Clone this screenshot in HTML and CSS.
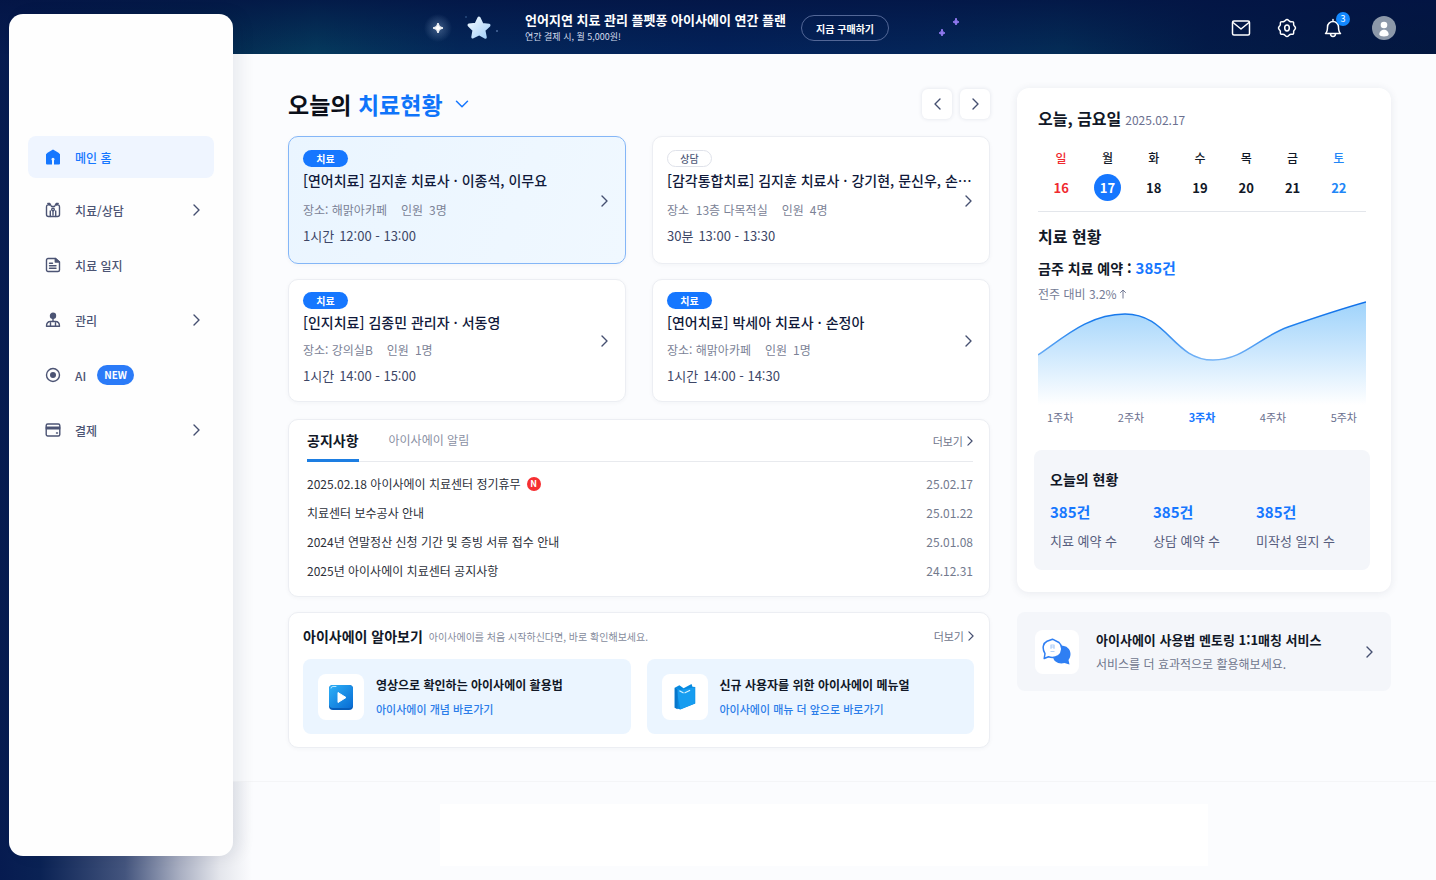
FILE: index.html
```html
<!DOCTYPE html>
<html lang="ko">
<head>
    <meta charset="UTF-8">
    <meta name="viewport" content="width=device-width, initial-scale=1.0">
    <title>아이사에이</title>
    <link rel="stylesheet" href="styles.css">
</head>
<body>
    <svg class="sprite" aria-hidden="true">
        <symbol id="chevron" viewBox="0 0 7 12"><path d="M1 1l5 5-5 5" fill="none" stroke="currentColor" stroke-width="1.4" stroke-linecap="round" stroke-linejoin="round"/></symbol>
    </svg>

    <div class="app">
        <header class="topbar">
            <div class="promo">
                <svg class="sparkle" viewBox="0 0 28 28" aria-hidden="true"><path d="M14 9Q14.600 13.400 19 14 14.600 14.600 14 19 13.400 14.600 9 14 13.400 13.400 14 9Z" fill="#fff" stroke="#fff"/></svg>
                <svg class="star" viewBox="0 0 36 28" aria-hidden="true">
                    <defs><linearGradient id="starFill" x1="0" y1="0" x2="1" y2="1"><stop offset="0" stop-color="#f1f9ff"/><stop offset="1" stop-color="#a3cff8"/></linearGradient></defs>
                    <path d="m16 4 3.1 6.4 6.9.9-5.1 4.9 1.4 7-6.3-3.4-6.2 3.2 1.2-6.9-5-5 7-.9Z" fill="url(#starFill)" stroke="url(#starFill)" stroke-width="3" stroke-linejoin="round"/>
                    <circle cx="34" cy="17" r="1" fill="#4a6a9c"/><circle cx="3" cy="3" r="1" fill="#274a7c"/>
                </svg>
                <div class="promo-text">
                    <strong>언어지연 치료 관리 플펫퐁 아이사에이 연간 플랜</strong>
                    <span>연간 결제 시, 월 5,000원!</span>
                </div>
                <button class="promo-button" type="button">지금 구매하기</button>
                <svg class="sparkles" viewBox="0 0 24 22" aria-hidden="true">
                    <path d="M18 1Q18.400 4.600 21 5 18.400 5.400 18 8 17.600 5.400 15 5 17.600 4.600 18 1ZM4 12Q4.400 15.600 7 16 4.400 16.400 4 19 3.600 16.400 1 16 3.600 15.600 4 12Z" fill="#8f78ee" stroke="#8f78ee"/>
                </svg>
            </div>
            <div class="tools">
                <button type="button" aria-label="메일">
                    <svg viewBox="0 0 22 22"><rect x="2.500" y="4" width="17" height="14" rx="1.500"/><path d="m3 5.500 8 6.500 8-6.500"/></svg>
                </button>
                <button type="button" aria-label="설정">
                    <svg viewBox="0 0 22 22"><path d="M11 2.500c1.200 0 1.800 1.500 3 2s2.600-.3 3.300.5 0 2.100.5 3.200 1.700 1.600 1.700 2.800-1.200 1.700-1.700 2.800.3 2.400-.5 3.200-2.200 0-3.300.5-1.800 2-3 2-1.900-1.500-3-2-2.500.3-3.300-.5 0-2.100-.5-3.200-1.700-1.600-1.700-2.800 1.200-1.700 1.700-2.800-.3-2.400.5-3.200 2.100 0 3.300-.5 1.800-2 3-2Z"/><ellipse cx="11" cy="11" rx="2.300" ry="2.900"/></svg>
                </button>
                <button type="button" aria-label="알림">
                    <svg viewBox="0 0 22 22"><path d="M11 2.500V4M3.500 16.500c1.800-1.300 2-3 2-6.500a5.500 5.500 0 0 1 11 0c0 3.500.2 5.200 2 6.500ZM8.500 16.800c0 3.500 5 3.500 5 0"/></svg>
                    <span class="count">3</span>
                </button>
                <button class="avatar" type="button" aria-label="내 계정">
                    <svg viewBox="0 0 24 24"><circle cx="12" cy="12" r="12" fill="#8c98a9"/><circle cx="12" cy="9" r="3.300" fill="#fff"/><path d="M7.300 18.500c0-6.500 9.400-6.500 9.400 0 0 2.500-9.400 2.500-9.400 0Z" fill="#fff"/></svg>
                </button>
            </div>
        </header>

        <aside class="sidebar">
            <nav>
                <a class="nav-item active" href="#">
                    <svg viewBox="0 0 16 16"><path d="M1 5.200 2.500 3.800 8 .6l5.500 3.200L15 5.200V14.500a1 1 0 0 1-1 1H9V11.500a1.500 1.500 0 1 0-2 0v4H2a1 1 0 0 1-1-1Z" fill="currentColor"/></svg>
                    <span>메인 홈</span>
                </a>
                <a class="nav-item" href="#">
                    <svg class="line" viewBox="0 0 16 16"><path d="M4.500 3C2 2.500 1.500 3.500 1.500 5v7.500a2 2 0 0 0 2 2h1.800V9M11.500 3c2.500-.5 3 .5 3 2v7.500a2 2 0 0 1-2 2h-1.800V9M2.800 1.500h2l1.700 3h3l1.700-3h2"/><circle cx="8" cy="7.500" r="1.300"/><path d="M8 9v4M5.500 14.500h5"/></svg>
                    <span>치료/상담</span>
                    <svg class="chevron"><use href="#chevron"/></svg>
                </a>
                <a class="nav-item" href="#">
                    <svg class="line" viewBox="0 0 16 16"><path d="M3 1.500h7.500L14.500 5v8a1.500 1.500 0 0 1-1.500 1.500H3A1.500 1.500 0 0 1 1.500 13V3A1.500 1.500 0 0 1 3 1.500ZM4.500 6.200h3M4.500 8.800h6.500M4.500 11.300h6.500"/><path d="M10.300 1.500V5h4Z" fill="currentColor"/></svg>
                    <span>치료 일지</span>
                </a>
                <a class="nav-item" href="#">
                    <svg class="line" viewBox="0 0 16 16"><circle cx="8" cy="3.800" r="2.500" fill="currentColor"/><path d="M8 6v3.500M1.500 14.300c0-3.300 1.500-4.800 4-4.800h5c2.500 0 4 1.500 4 4.800ZM5.500 11v3M10.500 11v3"/></svg>
                    <span>관리</span>
                    <svg class="chevron"><use href="#chevron"/></svg>
                </a>
                <a class="nav-item" href="#">
                    <svg class="line" viewBox="0 0 16 16"><circle cx="8" cy="8" r="6.500"/><circle cx="8" cy="8" r="2.300" fill="currentColor"/></svg>
                    <span>AI</span>
                    <em class="new">NEW</em>
                </a>
                <a class="nav-item" href="#">
                    <svg class="line" viewBox="0 0 16 16"><rect x="1.200" y="2" width="13.600" height="12" rx="1.500"/><path d="M1.200 5.300h13.600M1.200 6.700h13.600M11.500 11h1"/></svg>
                    <span>결제</span>
                    <svg class="chevron"><use href="#chevron"/></svg>
                </a>
            </nav>
        </aside>

        <main class="content">
            <div class="column">
                <div class="title-row">
                    <h1>오늘의 <span>치료현황</span></h1>
                    <button class="toggle" type="button" aria-label="현황 선택"><svg viewBox="0 0 14 8"><path d="m1.500 1.200 5.500 5.500 5.500-5.500"/></svg></button>
                    <div class="pager">
                        <button type="button" aria-label="이전"><svg class="chevron back"><use href="#chevron"/></svg></button>
                        <button type="button" aria-label="다음"><svg class="chevron"><use href="#chevron"/></svg></button>
                    </div>
                </div>

                <section class="sessions">
                    <a class="session selected" href="#">
                        <div>
                            <span class="tag">치료</span>
                            <h2>[연어치료] 김지훈 치료사 · 이종석, 이무요</h2>
                            <p class="meta"><span>장소: 해맑아카페</span><span>인원</span> <span>3명</span></p>
                            <p class="time"><span>1시간</span><span>12:00 - 13:00</span></p>
                        </div>
                        <svg class="chevron"><use href="#chevron"/></svg>
                    </a>
                    <a class="session" href="#">
                        <div>
                            <span class="tag outline">상담</span>
                            <h2>[감각통합치료] 김지훈 치료사 · 강기현, 문신우, 손⋯</h2>
                            <p class="meta"><span>장소&nbsp; 13층 다목적실</span><span>인원</span> <span>4명</span></p>
                            <p class="time"><span>30분</span><span>13:00 - 13:30</span></p>
                        </div>
                        <svg class="chevron"><use href="#chevron"/></svg>
                    </a>
                    <a class="session" href="#">
                        <div>
                            <span class="tag">치료</span>
                            <h2>[인지치료] 김종민 관리자 · 서동영</h2>
                            <p class="meta"><span>장소: 강의실B</span><span>인원</span> <span>1명</span></p>
                            <p class="time"><span>1시간</span><span>14:00 - 15:00</span></p>
                        </div>
                        <svg class="chevron"><use href="#chevron"/></svg>
                    </a>
                    <a class="session" href="#">
                        <div>
                            <span class="tag">치료</span>
                            <h2>[연어치료] 박세아 치료사 · 손정아</h2>
                            <p class="meta"><span>장소: 해맑아카페</span><span>인원</span> <span>1명</span></p>
                            <p class="time"><span>1시간</span><span>14:00 - 14:30</span></p>
                        </div>
                        <svg class="chevron"><use href="#chevron"/></svg>
                    </a>
                </section>

                <section class="card notices">
                    <div class="tabs">
                        <button class="tab current" type="button">공지사항</button>
                        <button class="tab" type="button">아이사에이 알림</button>
                        <a class="more" href="#">더보기 <svg class="chevron"><use href="#chevron"/></svg></a>
                    </div>
                    <ul>
                        <li><a href="#">2025.02.18 아이사에이 치료센터 정기휴무</a><b class="fresh">N</b><time>25.02.17</time></li>
                        <li><a href="#">치료센터 보수공사 안내</a><time>25.01.22</time></li>
                        <li><a href="#">2024년 연말정산 신청 기간 및 증빙 서류 접수 안내</a><time>25.01.08</time></li>
                        <li><a href="#">2025년 아이사에이 치료센터 공지사항</a><time>24.12.31</time></li>
                    </ul>
                </section>

                <section class="card about">
                    <div class="about-head">
                        <h2>아이사에이 알아보기</h2>
                        <p>아이사에이를 처음 시작하신다면, 바로 확인해보세요.</p>
                        <a class="more" href="#">더보기 <svg class="chevron"><use href="#chevron"/></svg></a>
                    </div>
                    <div class="tiles">
                        <a class="tile" href="#">
                            <span class="icon-box">
                                <svg viewBox="0 0 26 26">
                                    <defs><linearGradient id="playFill" x1="0" y1="0" x2="1" y2="1"><stop offset="0" stop-color="#2db1f8"/><stop offset="1" stop-color="#086bd3"/></linearGradient></defs>
                                    <rect x="1" y="1" width="24" height="25" rx="4" fill="#075db9"/><rect x="1" y="1" width="24" height="23" rx="4" fill="url(#playFill)"/><path d="M3 4q0-1.500 2-1.500h3" fill="none" stroke="#b8e6ff" stroke-linecap="round"/><path d="m10 8.500 8 5-8 5Z" fill="#fff" stroke="#fff" stroke-linejoin="round"/>
                                </svg>
                            </span>
                            <span class="tile-text"><strong>영상으로 확인하는 아이사에이 활용법</strong><span>아이사에이 개념 바로가기</span></span>
                        </a>
                        <a class="tile" href="#">
                            <span class="icon-box">
                                <svg viewBox="0 0 26 30">
                                    <path d="M2 5 7 2.500l4.500 3L20 1l1 3 3 .2V22L8 28.500 2 26.500Z" fill="#078ae0"/><path d="M3.500 5.500 8 7.500 23.500 4.500V22L8 28Z" fill="#179df0"/><path d="M2 5v21.500L5 28V7Z" fill="#0876ca"/><path d="m7.500 8.500 3.500 2M13 10.500l5-2.500" stroke="#d6f2ff" stroke-width="1.300" stroke-linecap="round"/>
                                </svg>
                            </span>
                            <span class="tile-text"><strong>신규 사용자를 위한 아이사에이 메뉴얼</strong><span>아이사에이 매뉴 더 앞으로 바로가기</span></span>
                        </a>
                    </div>
                </section>
            </div>

            <div class="column side">
                <section class="summary">
                    <div class="today"><h2>오늘, 금요일</h2><time>2025.02.17</time></div>
                    <table class="week">
                        <thead><tr><th class="sun">일</th><th>월</th><th>화</th><th>수</th><th>목</th><th>금</th><th class="sat">토</th></tr></thead>
                        <tbody><tr><td class="sun">16</td><td><span class="picked">17</span></td><td>18</td><td>19</td><td>20</td><td>21</td><td class="sat">22</td></tr></tbody>
                    </table>
                    <h2>치료 현황</h2>
                    <p class="booking">금주 치료 예약 : <b>385건</b></p>
                    <p class="change">전주 대비 3.2% <svg viewBox="0 0 8 10"><path d="M4 9.500V1M1.200 3.800 4 1l2.800 2.800"/></svg></p>
                    <svg class="chart" viewBox="0 0 328 104" preserveAspectRatio="none" role="img" aria-label="주차별 치료 현황">
                        <defs>
                            <linearGradient id="area" x1="0" y1="0" x2="0" y2="1"><stop offset="0" stop-color="#9fd3fb"/><stop offset=".45" stop-color="#c9e6fd"/><stop offset="1" stop-color="#fff"/></linearGradient>
                            <linearGradient id="line" x1="0" y1="0" x2="0" y2="1"><stop offset="0" stop-color="#0f6fe8"/><stop offset=".4" stop-color="#1f80ee"/><stop offset="1" stop-color="#76b4f6"/></linearGradient>
                        </defs>
                        <path d="M0 54C24 38 50 13 87 13c43 0 48 46 88 46 30 0 45-22 75-33C276 17 303 8 328 1v103H0Z" fill="url(#area)"/>
                        <path d="M0 54C24 38 50 13 87 13c43 0 48 46 88 46 30 0 45-22 75-33C276 17 303 8 328 1" fill="none" stroke="url(#line)" stroke-width="1.500"/>
                    </svg>
                    <div class="weeks"><span>1주차</span><span>2주차</span><b>3주차</b><span>4주차</span><span>5주차</span></div>
                    <div class="stats">
                        <h3>오늘의 현황</h3>
                        <dl>
                            <div><dd>385건</dd><dt>치료 예약 수</dt></div>
                            <div><dd>385건</dd><dt>상담 예약 수</dt></div>
                            <div><dd>385건</dd><dt>미작성 일지 수</dt></div>
                        </dl>
                    </div>
                </section>

                <a class="mentor" href="#">
                    <span class="icon-box">
                        <svg viewBox="0 0 30 28">
                            <path d="M19 7.500c5.500 0 9.500 3.500 9.500 8.500 0 2.500-1 4.500-2 6l1 4.500-5-1.500c-6 1.500-11-1.500-11.500-6Z" fill="#2f7ff3"/>
                            <path d="M10.500 1.200 17 4.500c4 3.500 3.500 10-.5 13-3 2-7 2.300-10 1.300L2.200 20.500l.8-4.800C-.5 10 1.500 4.800 5 3.200Z" fill="#fff" stroke="#2f7ff3" stroke-width="1.500" stroke-linejoin="round"/>
                            <path d="M8.500 7h4M8.500 9h4M9 7v4M12 7v4M8.500 13.500h4" stroke="#9cc4f7" stroke-width=".8"/>
                        </svg>
                    </span>
                    <span class="mentor-text"><strong>아이사에이 사용법 멘토링 1:1매칭 서비스</strong><span>서비스를 더 효과적으로 활용해보세요.</span></span>
                    <svg class="chevron"><use href="#chevron"/></svg>
                </a>
            </div>
        </main>

        <footer class="footer"><div></div></footer>
    </div>
</body>
</html>
```
FILE: styles.css
```css
* {
    box-sizing: border-box;
}
body {
    margin: 0;
    font-family: "Noto Sans CJK KR", sans-serif;
    font-size: 12px;
    color: #111827;
    background: #fbfcfe;
}
h1, h2, h3, p, ul, dl, dd {
    margin: 0;
    padding: 0;
}
a {
    color: inherit;
    text-decoration: none;
}
button {
    padding: 0;
    border: 0;
    background: none;
    font: inherit;
    color: inherit;
    cursor: pointer;
}
svg {
    display: block;
    flex: none;
}
.sprite {
    position: absolute;
    width: 0;
    height: 0;
}
.chevron {
    width: 7px;
    height: 12px;
    color: #454f70;
}
.back {
    transform: rotate(180deg);
}

/* page frame: the sidebar card lies over the top bar's row */
.app {
    display: grid;
    grid-template-columns: 233px minmax(0, 1fr);
    grid-template-rows: 54px auto 1fr;
    min-height: 100vh;
    background: linear-gradient(90deg, #061b50 0, #0a2254 40px, #44557e 125px, #a9afc2 180px, #e4e6ec 220px, #fbfcfe 252px);
}
.topbar {
    grid-column: 1 / -1;
    grid-row: 1;
    display: flex;
    justify-content: space-between;
    align-items: center;
    padding: 2px 40px 0 424px;
    background:
        linear-gradient(180deg, rgba(3, 20, 68, 0.8), rgba(3, 20, 68, 0)),
        linear-gradient(90deg, #061b50 0, #04294f 14%, #053a5d 22%, #04285a 32%, #03225a 50%, #04265a 64%, #042d57 74%, #031b48 84%, #03173f 100%);
}
.sidebar {
    grid-column: 1;
    grid-row: 1 / -1;
    z-index: 1;
    margin: 14px 0 25px 9px;
    padding: 122px 19px 0;
    border-radius: 14px;
    background: #fefefe;
    box-shadow: 8px 0 16px rgba(20, 25, 50, 0.07);
}
.content {
    grid-column: 2;
    grid-row: 2;
    display: grid;
    grid-template-columns: minmax(0, 1fr) 374px;
    align-items: start;
    gap: 27px;
    padding: 34px 45px 33px 55px;
    background: #fbfcfe;
}
.footer {
    grid-column: 2;
    grid-row: 3;
    padding: 22px 228px 15px 207px;
    border-top: 1px solid #f4f5f7;
}
.footer div {
    height: 62px;
    background: #fff;
}

/* top bar */
.promo {
    display: flex;
    align-items: center;
    color: #fff;
}
.sparkle {
    width: 28px;
    height: 28px;
    background: radial-gradient(circle closest-side, rgba(170, 200, 235, 0.35), rgba(170, 200, 235, 0));
}
.star {
    width: 36px;
    height: 28px;
    margin-left: 11px;
}
.promo-text {
    display: flex;
    flex-direction: column;
    margin: 0 15px 0 26px;
}
.promo-text strong {
    font-size: 13px;
    line-height: 18px;
}
.promo-text span {
    font-size: 9px;
    line-height: 16px;
    color: #d3dcee;
}
.promo-button {
    height: 26px;
    padding: 0 14px;
    border: 1px solid #536797;
    border-radius: 13px;
    font-size: 10px;
    font-weight: 700;
}
.sparkles {
    width: 24px;
    height: 22px;
    margin-left: 49px;
}
.tools {
    display: flex;
    align-items: center;
    gap: 24px;
    color: #fff;
}
.tools button {
    position: relative;
}
.tools svg {
    width: 22px;
    height: 22px;
    fill: none;
    stroke: currentColor;
    stroke-width: 1.5;
    stroke-linecap: round;
    stroke-linejoin: round;
}
.tools .avatar svg {
    width: 24px;
    height: 24px;
    stroke: none;
}
.tools .avatar {
    margin-left: 4px;
}
.count {
    position: absolute;
    top: -5px;
    right: -6px;
    width: 14px;
    height: 14px;
    border-radius: 50%;
    background: #1288ff;
    font-size: 9px;
    line-height: 14px;
    text-align: center;
}

/* sidebar menu */
.sidebar nav {
    display: flex;
    flex-direction: column;
    gap: 9px;
}
.nav-item {
    display: flex;
    align-items: center;
    height: 46px;
    padding: 0 14px 0 17px;
    border-radius: 8px;
    font-weight: 500;
    color: #4c5474;
}
.nav-item.active {
    height: 42px;
    background: #eff5ff;
    color: #1677ff;
}
.nav-item > svg:first-child {
    width: 16px;
    height: 16px;
    margin-right: 14px;
}
.nav-item .chevron {
    margin-left: auto;
}
.line {
    fill: none;
    stroke: currentColor;
    stroke-width: 1.4;
    stroke-linecap: round;
    stroke-linejoin: round;
}
.new {
    margin-left: 11px;
    padding: 0 7px;
    border-radius: 10px;
    background: #2b7bf8;
    font-size: 10px;
    font-style: normal;
    font-weight: 700;
    line-height: 20px;
    color: #fff;
}

/* title and pager */
.title-row {
    display: flex;
    align-items: center;
    height: 32px;
    margin-bottom: 16px;
}
h1 {
    font-size: 23px;
    line-height: 30px;
    color: #0b0f19;
}
h1 span {
    color: #0f74fa;
}
.toggle {
    margin-left: 12px;
}
.toggle svg {
    width: 14px;
    height: 8px;
    fill: none;
    stroke: #1677ff;
    stroke-width: 1.5;
    stroke-linecap: round;
    stroke-linejoin: round;
}
.pager {
    display: flex;
    gap: 8px;
    margin-left: auto;
}
.pager button {
    display: grid;
    place-items: center;
    width: 30px;
    height: 30px;
    border-radius: 6px;
    background: #fff;
    box-shadow: 0 0 4px rgba(30, 40, 80, 0.12);
}

/* session cards */
.sessions {
    display: grid;
    grid-template-columns: repeat(2, minmax(0, 1fr));
    gap: 15px 26px;
    margin-bottom: 17px;
}
.session, .card {
    border: 1px solid #eceef3;
    border-radius: 10px;
    background: #fff;
    box-shadow: 0 1px 4px rgba(30, 40, 80, 0.04);
}
.session {
    display: grid;
    grid-template-columns: minmax(0, 1fr) 7px;
    min-height: 123px;
    padding: 12px 17px 12px 14px;
}
.session:nth-child(-n+2) {
    min-height: 128px;
    padding-top: 13px;
}
.session:nth-child(-n+2) .meta {
    margin-top: 10px;
}
.session .chevron {
    align-self: center;
}
.session.selected {
    border-color: #84b6f7;
    background: linear-gradient(110deg, #eaf5ff, #f0f8ff);
}
.tag {
    display: block;
    width: 45px;
    height: 17px;
    border-radius: 9px;
    background: #1677ff;
    font-size: 10px;
    font-weight: 700;
    line-height: 17px;
    text-align: center;
    color: #fff;
}
.tag.outline {
    border: 1px solid #dfe2ea;
    background: #fff;
    font-weight: 500;
    line-height: 15px;
    color: #4f5877;
}
.session h2 {
    margin-top: 2px;
    font-size: 14px;
    font-weight: 500;
    line-height: 22px;
    white-space: nowrap;
    color: #10193a;
}
.meta, .time {
    display: flex;
    margin-top: 8px;
    line-height: 18px;
}
.meta {
    gap: 6px;
    color: #7b8296;
}
.meta span:first-child {
    margin-right: 8px;
}
.time {
    gap: 5px;
    font-size: 13px;
    color: #3d4666;
}

/* notices */
.notices {
    margin-bottom: 15px;
    padding: 0 16px 11px 18px;
}
.tabs {
    display: flex;
    height: 42px;
    border-bottom: 1px solid #e8eaee;
}
.tab {
    height: 42px;
    margin-right: 30px;
    border-bottom: 3px solid transparent;
    color: #8a90a3;
}
.tab.current {
    border-bottom-color: #1d7ee2;
    font-size: 14px;
    font-weight: 700;
    color: #111827;
}
.more {
    display: flex;
    align-items: center;
    gap: 4px;
    margin-left: auto;
    font-size: 11px;
    color: #6f768c;
}
.more .chevron {
    width: 6px;
    height: 10px;
}
.notices ul {
    margin-top: 7px;
    list-style: none;
}
.notices li {
    display: flex;
    align-items: center;
    height: 29px;
    color: #2c303a;
}
.fresh {
    width: 14px;
    height: 14px;
    margin-left: 6px;
    border-radius: 50%;
    background: #f62f32;
    font-size: 9px;
    line-height: 14px;
    text-align: center;
    color: #fff;
}
.notices time {
    margin-left: auto;
    color: #737a8e;
}

/* about */
.about {
    padding: 0 15px 13px 14px;
}
.about-head {
    display: flex;
    align-items: center;
    height: 46px;
}
.about-head h2 {
    font-size: 14px;
}
.about-head p {
    margin-left: 6px;
    font-size: 10px;
    color: #858b9c;
}
.tiles {
    display: grid;
    grid-template-columns: repeat(2, minmax(0, 1fr));
    gap: 16px;
}
.tile {
    display: flex;
    align-items: center;
    gap: 12px;
    height: 75px;
    padding: 0 15px;
    border-radius: 8px;
    background: #ebf5ff;
}
.icon-box {
    display: grid;
    place-items: center;
    width: 46px;
    height: 46px;
    border-radius: 8px;
    background: #fff;
}
.icon-box svg {
    width: 26px;
    height: 28px;
}
.tile-text, .mentor-text {
    display: flex;
    flex-direction: column;
    line-height: 24px;
}
.tile-text > span {
    font-size: 11px;
    font-weight: 500;
    color: #2b7de9;
}

/* right column */
.summary {
    margin-bottom: 20px;
    padding: 18px 25px 22px 21px;
    border-radius: 12px;
    background: #fff;
    box-shadow: 0 1px 8px rgba(30, 40, 80, 0.09);
}
.summary h2 {
    font-size: 16px;
    line-height: 24px;
}
.today {
    display: flex;
    align-items: baseline;
    gap: 4px;
    color: #111827;
}
.today time {
    color: #6b7190;
}
.week {
    width: 100%;
    margin: 12px 0;
    padding: 0 4px 9px 0;
    border-bottom: 1px solid #e3e6eb;
    border-spacing: 0;
    table-layout: fixed;
}
.week th, .week td {
    height: 30px;
    padding: 0;
    text-align: center;
}
.week th {
    font-weight: 500;
}
.week td {
    font-size: 13px;
    font-weight: 700;
}
.week .sun {
    color: #f02a2f;
}
.week .sat {
    color: #2186f7;
}
.picked {
    display: inline-block;
    width: 27px;
    border-radius: 50%;
    background: #1677ff;
    line-height: 27px;
    color: #fff;
}
.booking {
    margin-top: 8px;
    font-size: 14px;
    font-weight: 700;
    line-height: 24px;
}
.booking b, .stats dd {
    font-size: 15px;
    font-weight: 700;
    color: #1677ff;
}
.change {
    display: flex;
    align-items: center;
    gap: 2px;
    margin-top: 7px;
    line-height: 14px;
    color: #747b95;
}
.change svg {
    width: 8px;
    height: 10px;
    fill: none;
    stroke: currentColor;
}
.chart {
    width: 100%;
    height: 104px;
}
.weeks {
    display: flex;
    justify-content: space-between;
    margin-top: 3px;
    padding: 0 9px;
    font-size: 11px;
    line-height: 18px;
    color: #6b7190;
}
.weeks b {
    color: #1677ff;
}
.stats {
    margin: 24px -4px 0;
    padding: 17px 11px 17px 16px;
    border-radius: 8px;
    background: #f4f6fa;
    line-height: 24px;
}
.stats h3 {
    font-size: 14px;
}
.stats dl {
    display: grid;
    grid-template-columns: repeat(3, minmax(0, 1fr));
    margin-top: 9px;
}
.stats dl div {
    display: flex;
    flex-direction: column;
    gap: 5px;
}
.stats dt {
    font-size: 13px;
    color: #565d7d;
}
.mentor {
    display: flex;
    align-items: center;
    height: 79px;
    padding: 0 18px;
    border-radius: 8px;
    background: #f4f6fa;
}
.mentor .icon-box {
    width: 44px;
    height: 44px;
    margin-right: 17px;
}
.mentor .icon-box svg {
    width: 30px;
}
.mentor strong {
    font-size: 13px;
}
.mentor-text > span {
    color: #70768d;
}
.mentor .chevron {
    margin-left: auto;
}
```
